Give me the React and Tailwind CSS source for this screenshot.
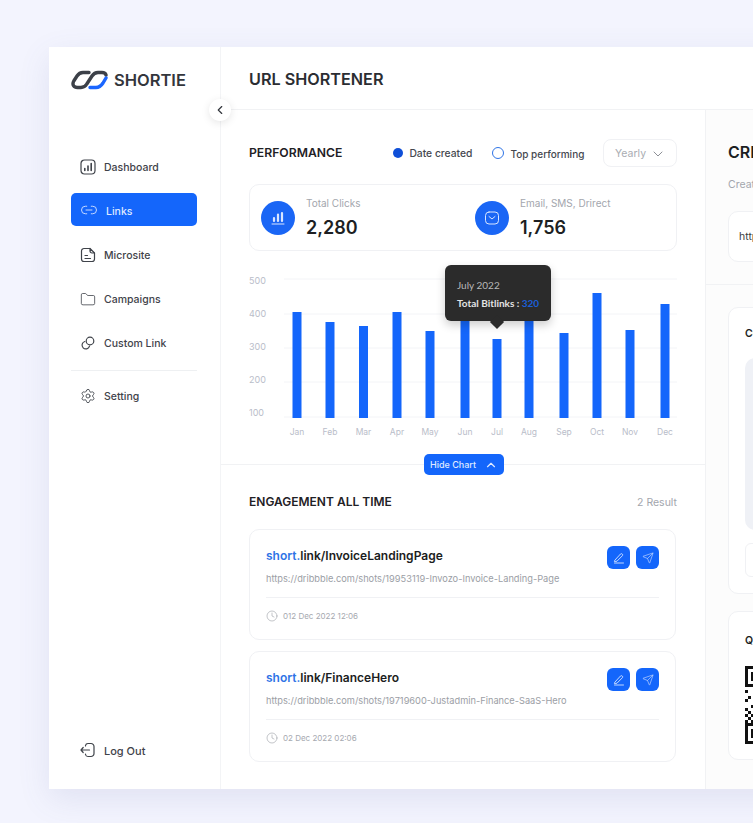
import { ChevronLeft, ChevronDown, ChevronUp, Link2, Folder, Settings, Clock, Send } from 'lucide-react';

const DashIcon = () => (
  <svg width="16" height="16" viewBox="0 0 16 16" fill="none" stroke="#3f434a" strokeWidth="1.2" strokeLinecap="round">
    <rect x="1" y="1" width="14" height="14" rx="3.5" />
    <path d="M4.8 11.5V9.5M8 11.5V7M11.2 11.5V4.5" strokeWidth="1.6" />
  </svg>
);

const DocIcon = () => (
  <svg width="16" height="16" viewBox="0 0 16 16" fill="none" stroke="#3f434a" strokeWidth="1.2" strokeLinecap="round" strokeLinejoin="round">
    <path d="M10 1.5H4A2.5 2.5 0 0 0 1.5 4v8A2.5 2.5 0 0 0 4 14.5h8a2.5 2.5 0 0 0 2.5-2.5V6" />
    <path d="M10 1.5V4A2 2 0 0 0 12 6h2.5z" />
    <path d="M5 8.5h2.5M5 11.5h5.5" />
  </svg>
);

const ChainIcon = () => (
  <svg width="16" height="16" viewBox="0 0 16 16" fill="none" stroke="#3f434a" strokeWidth="1.2" strokeLinecap="round">
    <circle cx="10" cy="6" r="3.8" />
    <path d="M4.8 6.5A3.8 3.8 0 1 0 9.5 11.2" />
  </svg>
);

const LogoutIcon = () => (
  <svg width="16" height="16" viewBox="0 0 16 16" fill="none" stroke="#3f434a" strokeWidth="1.2" strokeLinecap="round" strokeLinejoin="round">
    <path d="M5.5 4V3.5a2.5 2.5 0 0 1 2.5-2h3a3 3 0 0 1 3 3v7a3 3 0 0 1-3 3H8a2.5 2.5 0 0 1-2.5-2V12" />
    <path d="M9.5 8H1M3.2 5.5 1 8l2.2 2.5" />
  </svg>
);

const Logo = () => (
  <svg width="37" height="20" viewBox="0 0 37 20" fill="none" strokeWidth="3.4" strokeLinecap="round" strokeLinejoin="round">
    <path d="M18 2.5H12C9.5 2.5 7.5 3.7 6 6L2.8 11C0.8 14.5 2.8 17.5 6.5 17.5H10C12.5 17.5 14.3 16.5 15.8 14L21 6C22.5 3.7 24.5 2.5 27 2.5H31C33 2.5 34.5 3.2 35 5" stroke="#3c4048" />
    <path d="M35 8 32 13C30 16 28.5 17.5 25 17.5H19" stroke="#1a66ff" />
  </svg>
);

const NavItem = ({ icon, label, size = 'text-[10.5px]' }) => (
  <div className={`flex items-center gap-[8px] h-[44px] pl-[9px] font-medium text-[#3f434a] ${size}`}>
    <span className="flex w-[16px] justify-center">{icon}</span>
    <span className="pt-[2px]">{label}</span>
  </div>
);

const months = [
  ['Jan', 297, 312], ['Feb', 330, 322], ['Mar', 363.5, 326], ['Apr', 397, 312],
  ['May', 430, 331], ['Jun', 465, 300], ['Jul', 497, 339], ['Aug', 529, 300],
  ['Sep', 564, 333], ['Oct', 597, 293], ['Nov', 630, 330], ['Dec', 665, 304],
];
const gridLines = [279, 314, 348, 382, 417];
const yLabels = [[500, 284], [400, 317], [300, 350], [200, 383], [100, 416]];

const Chart = () => (
  <div className="relative mt-[14px] h-[182px]">
    <svg width="436" height="182" viewBox="249 265 436 182" className="block" fontFamily="Inter, sans-serif">
      {gridLines.map((y) => <line key={y} x1="284" x2="677" y1={y} y2={y} stroke="#f3f4f7" />)}
      {yLabels.map(([v, y]) => <text key={v} x="249" y={y} fontSize="9" fill="#b9bdc9">{v}</text>)}
      {months.map(([m, x, top]) => (
        <g key={m}>
          <rect x={x - 4.5} y={top} width="9" height={418 - top} fill="#1466fb" />
          <text x={x} y="435" fontSize="8.5" fill="#b9bdc9" textAnchor="middle">{m}</text>
        </g>
      ))}
    </svg>
    <div className="absolute left-[196px] top-0 w-[106px] h-[56px] rounded-md bg-[#2b2b2b] pl-[12px] pt-[13px] font-['Lato',sans-serif] text-[10px] shadow-[0_4px_10px_rgba(0,0,0,0.2)]">
      <p className="leading-[14px] text-[#b9b9b9]">July 2022</p>
      <p className="mt-[4px] leading-[14px] font-bold text-[#e4e4e4]">Total Bitlinks : <span className="text-[#1a5fd8]">320</span></p>
      <div className="absolute left-[47px] top-[52px] h-[10px] w-[10px] rotate-45 bg-[#2b2b2b]" />
    </div>
  </div>
);

const StatBlock = ({ icon, label, value }) => (
  <div className="flex w-[214px] shrink-0 items-center">
    <div className="flex h-[34px] w-[34px] items-center justify-center rounded-full bg-[#1a66f5]">{icon}</div>
    <div className="ml-[11px]">
      <p className="text-[10px] leading-[14px] text-[#a3a6ad]">{label}</p>
      <p className="mt-[6px] text-[18px] leading-[24px] font-semibold text-[#1d1f23]">{value}</p>
    </div>
  </div>
);

const LinkCard = ({ slug, url, date }) => (
  <div className="h-[111px] w-[427px] rounded-[10px] border border-[#f0f1f4] px-[16px] pt-[16px]">
    <div className="flex justify-between">
      <p className="mt-[1px] text-[12px] leading-[18px] font-semibold text-[#1b1d21]"><span className="text-[#2f74e6]">short.</span>link/{slug}</p>
      <div className="flex gap-[6px]">
        <button className="flex h-[23px] w-[23px] items-center justify-center rounded-md bg-[#1466fb]">
          <svg width="12" height="12" viewBox="0 0 12 12" fill="none" stroke="#d5e3ff" strokeWidth="0.9" strokeLinecap="round" strokeLinejoin="round">
            <path d="M2 8 7.5 2a1.3 1.3 0 0 1 2 1.6L4 9.2 1.8 9.5zM1.5 11h9" />
          </svg>
        </button>
        <button className="flex h-[23px] w-[23px] items-center justify-center rounded-md bg-[#1466fb]">
          <Send size={12} strokeWidth={1.2} color="#d5e3ff" />
        </button>
      </div>
    </div>
    <p className="mt-[3px] text-[9.25px] leading-[14px] text-[#9b9ea5]">{url}</p>
    <div className="mt-[11px] border-t border-[#f0f1f4]" />
    <div className="mt-[12px] flex items-center gap-[5px] text-[8px] text-[#a6a9af]">
      <Clock size={12} strokeWidth={1.2} color="#9b9ea5" />
      {date}
    </div>
  </div>
);

const qrCells = [
  [0, 8], [3, 8], [5, 9], [1, 10], [6, 10], [0, 11], [3, 11], [7, 12], [2, 13], [5, 13],
  [0, 14], [4, 14], [1, 15], [3, 15], [6, 15], [0, 16], [2, 16], [4, 16], [5, 16], [1, 17], [3, 17],
  [0, 18], [2, 18], [7, 18], [4, 19], [1, 19],
];

const QrCode = () => (
  <svg width="78" height="78" viewBox="0 0 26 26" className="mt-[18px]" shapeRendering="crispEdges">
    <path d="M0 0h7v7H0zM1 1v5h5V1z M0 19h7v7H0zM1 20v5h5v-5z" fill="#111" fillRule="evenodd" />
    <rect x="2" y="2" width="3" height="3" fill="#111" />
    <rect x="2" y="21" width="3" height="3" fill="#111" />
    {qrCells.map(([x, y]) => <rect key={`${x}-${y}`} x={x} y={y} width="1" height="1" fill="#111" />)}
  </svg>
);

export default function App() {
  return (
    <div className="h-[823px] w-[753px] overflow-hidden bg-[#f3f4fe] pl-[49px] pt-[47px] font-['Inter',sans-serif]">
      <div className="relative flex h-[742px] w-[900px] bg-white shadow-[0_10px_30px_rgba(90,95,160,0.12)]">
        <aside className="flex w-[172px] shrink-0 flex-col border-r border-[#f3f4f6] pl-[22px] pr-[23px]">
          <div className="flex items-center gap-[6px] pt-[23px]">
            <Logo />
            <span className="text-[16.5px] leading-[20px] font-semibold text-[#33363c]">SHORTIE</span>
          </div>
          <nav className="mt-[55px]">
            <NavItem icon={<DashIcon />} label="Dashboard" />
            <div className="mt-[4px] flex h-[33px] items-center gap-[8px] rounded-[5px] bg-[#1466fb] pl-[9px] text-[10.5px] font-medium text-[#dfe9ff]">
              <Link2 size={18} strokeWidth={1.3} color="#c9dbff" />
              <span className="pt-[4px]">Links</span>
            </div>
            <div className="mt-[7px]"><NavItem icon={<DocIcon />} label="Microsite" /></div>
            <NavItem icon={<Folder size={17} strokeWidth={1.2} color="#3f434a" />} label="Campaigns" />
            <NavItem icon={<ChainIcon />} label="Custom Link" />
            <div className="mb-[3px] mt-[5px] border-t border-[#eef0f2]" />
            <NavItem icon={<Settings size={16} strokeWidth={1.3} color="#3f434a" />} label="Setting" />
          </nav>
          <div className="mb-[17px] mt-auto">
            <NavItem icon={<LogoutIcon />} label="Log Out" size="text-[11px]" />
          </div>
        </aside>

        <button className="absolute left-[160px] top-[52px] z-10 flex h-[22px] w-[22px] items-center justify-center rounded-full bg-white shadow-[0_2px_8px_rgba(0,0,0,0.1)]">
          <ChevronLeft size={14} strokeWidth={2} color="#33363c" />
        </button>

        <div className="flex flex-1 flex-col">
          <header className="flex h-[63px] shrink-0 items-center border-b border-[#f1f2f4] pl-[28px] pt-[2px]">
            <h1 className="text-[16.2px] font-semibold text-[#2b2d32]">URL SHORTENER</h1>
          </header>
          <div className="flex flex-1">
            <main className="w-[485px] shrink-0 border-r border-[#f1f2f4]">
              <section className="relative h-[355px] border-b border-[#f1f2f4] px-[28px] pt-[29px]">
                <div className="flex h-[28px] items-center">
                  <h2 className="text-[12.2px] font-semibold text-[#1f2125]">PERFORMANCE</h2>
                  <span className="ml-[51px] h-[10px] w-[10px] rounded-full bg-[#0f4fd8]" />
                  <span className="ml-[6px] pt-[2px] text-[10.3px] font-medium text-[#45484f]">Date created</span>
                  <span className="ml-[20px] h-[12px] w-[12px] rounded-full border border-[#2f74e6]" />
                  <span className="ml-[6px] pt-[2px] text-[10px] font-medium text-[#45484f]">Top performing</span>
                  <div className="ml-auto flex h-[28px] w-[74px] items-center gap-[4px] rounded-lg border border-[#f0f1f4] pl-[11px] pt-[1px] text-[10.5px] text-[#a9acb2]">
                    Yearly
                    <ChevronDown size={16} strokeWidth={1.5} color="#8d9096" />
                  </div>
                </div>
                <div className="mt-[17px] flex h-[67px] items-center overflow-hidden rounded-[10px] border border-[#f0f1f4] pl-[11px]">
                  <StatBlock
                    label="Total Clicks"
                    value="2,280"
                    icon={(
                      <svg width="16" height="16" viewBox="0 0 16 16" fill="none" stroke="#d9e6ff" strokeLinecap="round">
                        <path d="M4 11V8M8 11V4.5M12 11V3" strokeWidth="2.2" />
                        <path d="M2 14h12" strokeWidth="1" />
                      </svg>
                    )}
                  />
                  <StatBlock
                    label="Email, SMS, Drirect"
                    value="1,756"
                    icon={(
                      <svg width="16" height="16" viewBox="0 0 16 16" fill="none" stroke="#d9e6ff" strokeWidth="1" strokeLinecap="round" strokeLinejoin="round">
                        <rect x="1.5" y="2" width="13" height="12" rx="3.5" />
                        <path d="M5 6.5 8 9l3-2.5" />
                      </svg>
                    )}
                  />
                </div>
                <Chart />
                <button className="absolute bottom-[-11px] left-[203px] flex h-[21px] w-[80px] items-center justify-center gap-[8px] rounded-[5px] bg-[#1466fb] text-[9px] font-medium text-[#dfe9ff]">
                  Hide Chart
                  <ChevronUp size={14} strokeWidth={2} color="#dfe9ff" />
                </button>
              </section>
              <section className="px-[28px] pt-[28px]">
                <div className="flex h-[18px] items-center justify-between">
                  <h2 className="text-[12px] font-semibold text-[#1f2125]">ENGAGEMENT ALL TIME</h2>
                  <span className="pt-[2px] text-[10.5px] text-[#a3a6ad]">2 Result</span>
                </div>
                <div className="mt-[18px] flex flex-col gap-[11px]">
                  <LinkCard slug="InvoiceLandingPage" url="https://dribbble.com/shots/19953119-Invozo-Invoice-Landing-Page" date="012 Dec 2022 12:06" />
                  <LinkCard slug="FinanceHero" url="https://dribbble.com/shots/19719600-Justadmin-Finance-SaaS-Hero" date="02 Dec 2022 02:06" />
                </div>
              </section>
            </main>

            <aside className="flex-1 bg-[#fcfcfc]">
              <div className="h-[175px] border-b border-[#f1f2f4] pl-[22px] pt-[32px]">
                <h2 className="text-[16px] leading-[20px] font-semibold whitespace-nowrap text-[#1d1f23]">CREATE NEW LINK</h2>
                <p className="mt-[16px] text-[10.5px] leading-[14px] whitespace-nowrap text-[#a3a6ad]">Create your short link</p>
                <div className="mt-[19px] flex h-[51px] items-center rounded-l-[10px] border border-[#f0f1f4] bg-white pl-[10px] text-[10.5px] whitespace-nowrap text-[#3a3d43]">https://dribbble.com</div>
              </div>
              <div className="ml-[22px] mt-[22px] h-[287px] rounded-l-[10px] border border-[#f0f1f4] bg-white pl-[16px] pt-[19px]">
                <h3 className="text-[10.5px] leading-[14px] font-semibold whitespace-nowrap text-[#1d1f23]">Customize</h3>
                <div className="mt-[17px] h-[172px] rounded-l-[10px] bg-[#eff1f6]" />
                <div className="mt-[13px] h-[34px] rounded-l-md border border-[#f0f1f4]" />
              </div>
              <div className="ml-[22px] mt-[17px] h-[149px] rounded-l-[10px] border border-[#f0f1f4] bg-white pl-[16px] pt-[22px]">
                <h3 className="text-[10.5px] leading-[14px] font-semibold whitespace-nowrap text-[#1d1f23]">QR Code</h3>
                <QrCode />
              </div>
            </aside>
          </div>
        </div>
      </div>
    </div>
  );
}
